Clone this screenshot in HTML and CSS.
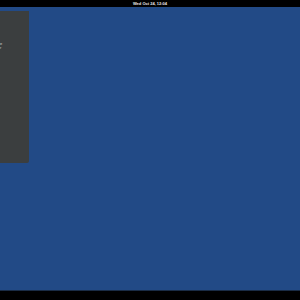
FILE: index.html
```html
<!DOCTYPE html>
<html lang="en">
<head>
    <meta charset="UTF-8">
    <meta name="viewport" content="width=device-width, initial-scale=1.0">
    <title>Desktop</title>
    <link rel="stylesheet" href="styles.css">
</head>
<body>
    <div class="topbar">
        <span class="clock">Wed Oct 24, 12:04</span>
    </div>

    <div class="desktop">
        <div class="panel">
            <p class="panel-line">e</p>
            <p class="panel-line">r</p>
        </div>
    </div>

    <div class="bottombar"></div>
</body>
</html>
```

FILE: styles.css
```css
html, body {
    margin: 0;
    padding: 0;
    height: 100%;
}
body {
    font-family: "Liberation Sans", Arial, sans-serif;
    background: #000000;
    display: flex;
    flex-direction: column;
    width: 300px;
    height: 300px;
    overflow: hidden;
}
.topbar {
    height: 7px;
    background: #000000;
    display: flex;
    align-items: center;
    justify-content: center;
}
.clock {
    color: #e8e8e8;
    font-size: 4px;
    font-weight: bold;
    line-height: 7px;
}
.desktop {
    flex: 1;
    background: #224a86;
    padding-top: 4px;
}
.panel {
    width: 29px;
    height: 152px;
    background: #3b3e3f;
    border-bottom-right-radius: 2px;
    padding-top: 31px;
    box-sizing: border-box;
}
.panel-line {
    margin: 0;
    color: #d6d6d6;
    font-size: 4px;
    line-height: 4px;
}
.bottombar {
    height: 9px;
    background: #000000;
    border-top: 1px solid #1a2c45;
}
```
